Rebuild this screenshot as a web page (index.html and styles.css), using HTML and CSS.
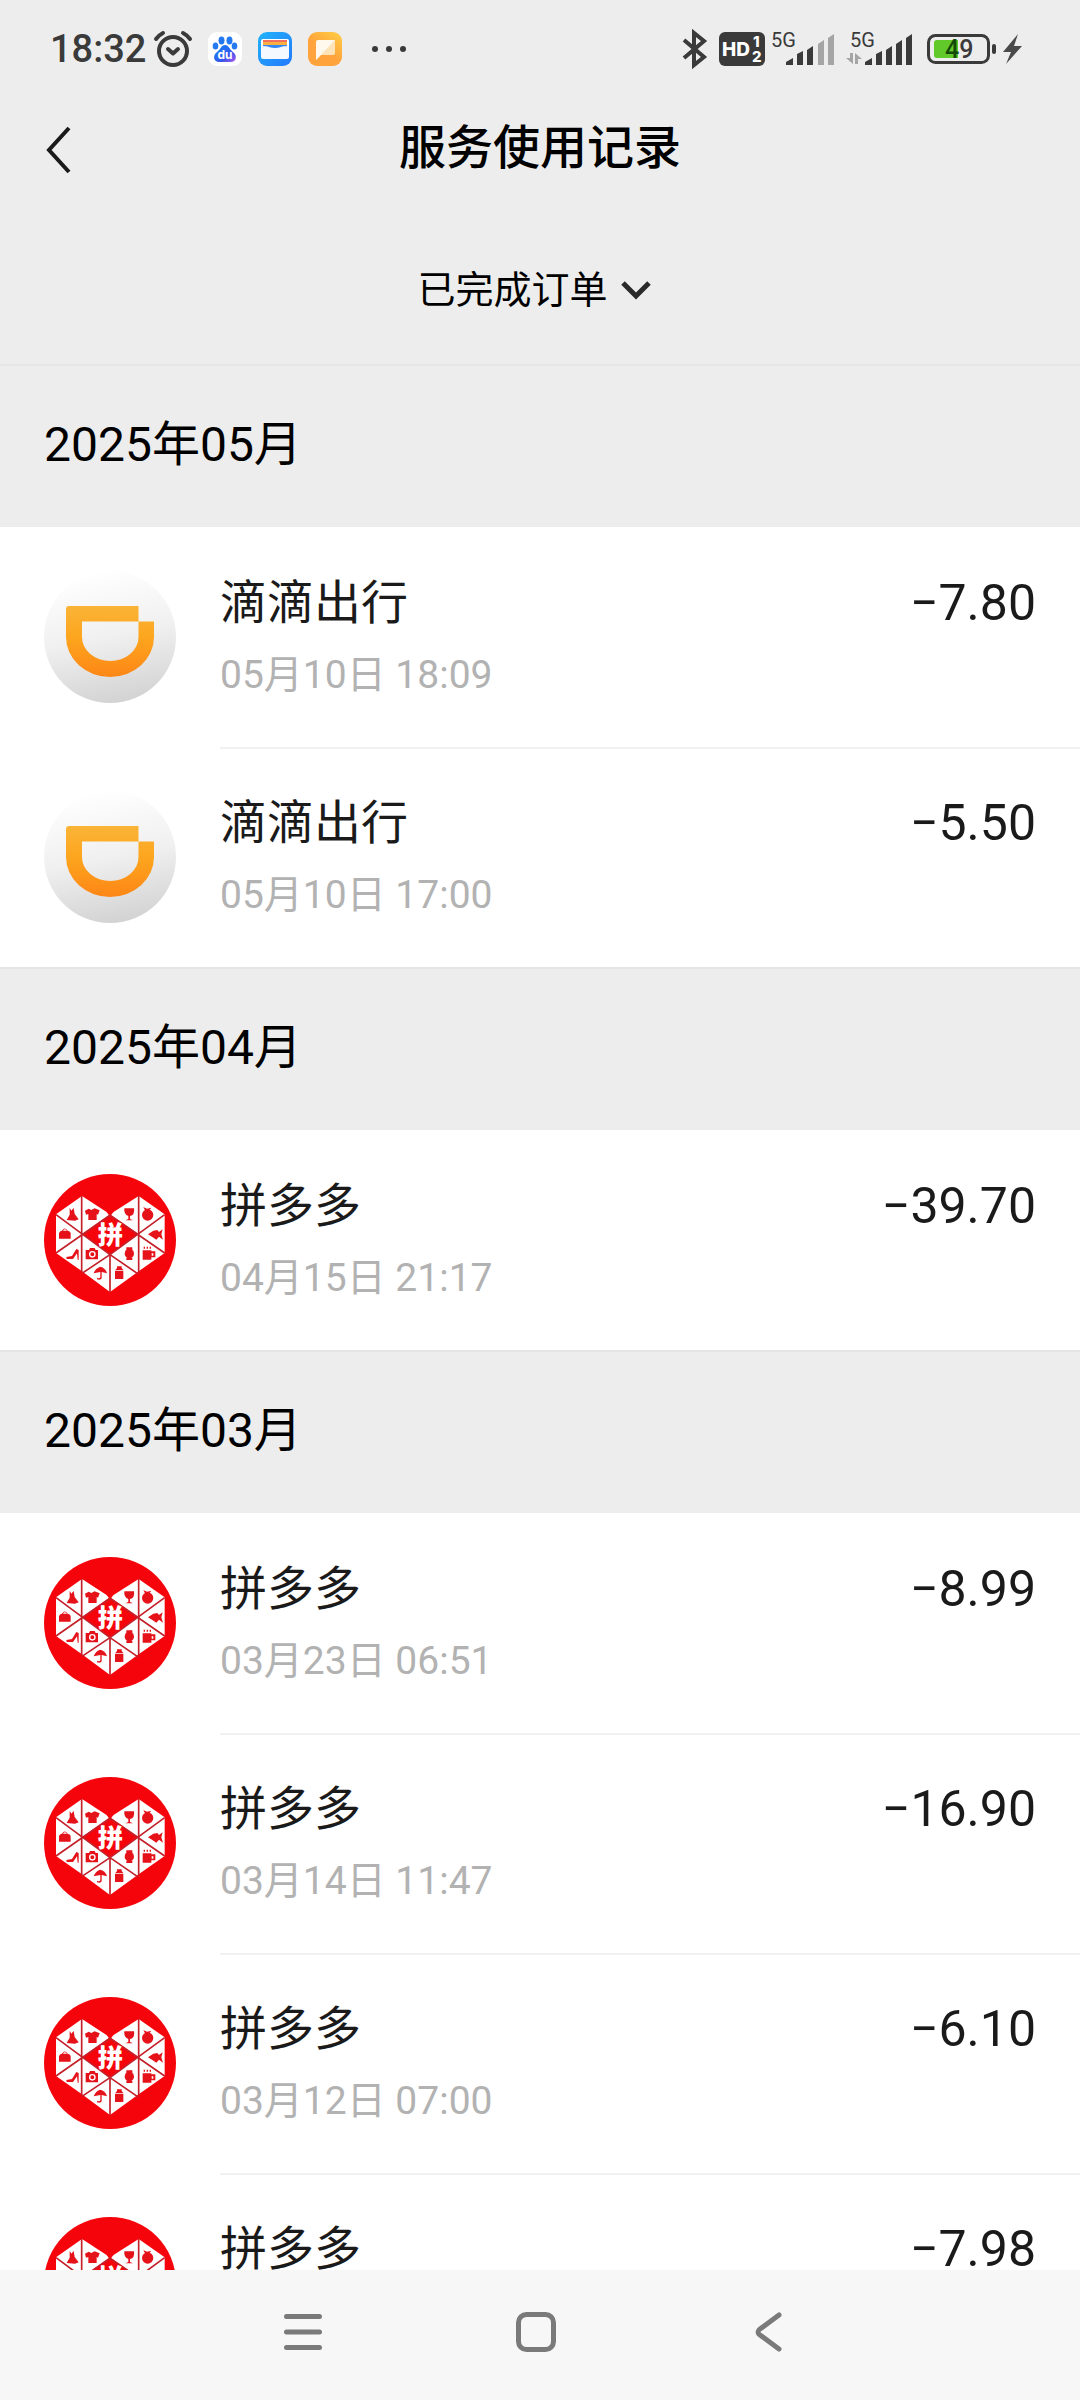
FILE: index.html
```html
<!DOCTYPE html>
<html lang="zh-CN">
<head>
<meta charset="utf-8">
<meta name="viewport" content="width=device-width, initial-scale=1">
<title>服务使用记录</title>
<link rel="stylesheet" href="styles.css">
</head>
<body>
<svg class="defs" aria-hidden="true">
  <defs>
    <linearGradient id="didi-bg" x1="0.4" y1="0" x2="0.6" y2="1">
      <stop offset="0" stop-color="#ffffff"/><stop offset="0.5" stop-color="#f0f0f0"/><stop offset="1" stop-color="#d2d2d2"/>
    </linearGradient>
    <linearGradient id="didi-d" x1="0" y1="0" x2="0" y2="1">
      <stop offset="0" stop-color="#fab437"/><stop offset="0.45" stop-color="#fda51e"/><stop offset="1" stop-color="#fd8616"/>
    </linearGradient>
    <linearGradient id="paw" x1="0" y1="0" x2="1" y2="1">
      <stop offset="0.3" stop-color="#1f74f2"/><stop offset="0.65" stop-color="#3a55ee"/><stop offset="1" stop-color="#b45cf0"/>
    </linearGradient>
    <linearGradient id="wallet" x1="0" y1="0" x2="1" y2="1">
      <stop offset="0" stop-color="#1fb4fb"/><stop offset="1" stop-color="#2478fb"/>
    </linearGradient>
    <linearGradient id="note" x1="1" y1="0" x2="0.3" y2="1">
      <stop offset="0" stop-color="#ffcf45"/><stop offset="0.6" stop-color="#ffa43c"/>
    </linearGradient>
    <symbol id="didi" viewBox="0 0 132 132">
      <circle cx="66" cy="66" r="66" fill="url(#didi-bg)"/>
      <path fill="url(#didi-d)" fill-rule="evenodd" d="M25 35H94.500V50.500H110V66A44 40 0 0 1 22 66V38Q22 35 25 35ZM38 50.500V66A28.200 24 0 0 0 94.500 66V50.500Z"/>
    </symbol>
    <symbol id="pdd" viewBox="42 42 396 396">
      <circle cx="240" cy="240" r="198" fill="#f6040c"/>
      <path fill="#fff" d="M78 163L156 108L240 163L326 108L404 163V279L326 334L240 396L156 334L78 279Z"/>
      <path fill="#f6040c" d="M240 163L326 222L240 283L156 222ZM230 156H250L240 170Z"/>
      <g fill="none" stroke="#c4202a" stroke-width="5">
        <path d="M155 108V336M326 108V336M240 282V396"/>
        <path d="M78 164L240 284L326 343M404 164L240 284L156 340M78 279L240 166L404 279"/>
      </g>
      <text x="241" y="252" class="pdd-char">拼</text>
      <g fill="#e5121a">
        <path d="M119 143L124 152L131 144L134 162L146 178L135 182L110 180L119 164Z"/>
        <path d="M176 146L184 150L194 145L209 151L204 164L200 162V180H175V162L168 164L165 152Z"/>
        <path d="M283 145H312Q315 166 300 168V177L309 181H286L295 177V168Q281 164 283 145Z"/>
        <circle cx="353" cy="165" r="17"/><path d="M340 141L351 146L364 143L356 153H346Z"/>
        <path fill-rule="evenodd" d="M87 236V219Q91 212 96 212Q104 199 113 212Q120 213 122 219V236ZM99 212H111Q104 204 99 212Z"/>
        <path d="M354 223L370 212L382 210L387 216L398 208L394 223L399 239L387 230L379 239L368 232Z"/>
        <path d="M109 291L126 288L139 267L146 270V299H143L141 280L129 297H110Z"/>
        <path fill-rule="evenodd" d="M167 270H177L180 264H194L197 270H204V298H167ZM187 273A10 10 0 1 0 187 293A10 10 0 1 0 187 273ZM187 277A6 6 0 1 1 187 289A6 6 0 1 1 187 277Z"/>
        <circle cx="298" cy="281" r="14"/><path d="M289 262H307V270H289ZM289 293H307V300H289Z"/>
        <path fill-rule="evenodd" d="M338 271H364V274H376V292H364V299H338ZM365 280V287H370V280Z"/>
        <path d="M341 260H345V266H341ZM350 260H354V266H350ZM359 260H363V266H359Z"/>
        <path d="M191 340Q196 325 210 320Q226 322 231 340L215 336V355Q212 362 201 358V353Q208 357 211 352V336Z"/>
        <path d="M261 319H275V324L280 330H256L261 324ZM255 332H280V357H255Z"/>
      </g>
    </symbol>
  </defs>
</svg>

<div class="status">
  <div class="status-left">
    <span class="clock">18:32</span>
    <svg class="icon" width="38" height="36" viewBox="0 0 38 36" aria-label="闹钟">
      <g fill="none" stroke="#3a3a3a" stroke-width="4" stroke-linecap="round" stroke-linejoin="round">
        <circle cx="19" cy="20" r="14"/><path d="M14 18L19 22.500L24 18"/>
        <path d="M2 8Q5 4 9 2M29 2Q33 4 36 8"/>
      </g>
    </svg>
    <svg class="icon" width="34" height="34" viewBox="0 0 34 34" aria-label="百度">
      <rect width="34" height="34" rx="9" fill="#fff"/>
      <g fill="#2478f0">
        <ellipse cx="13.500" cy="8.500" rx="3" ry="4"/><ellipse cx="21.500" cy="8.500" rx="3" ry="4"/>
        <ellipse cx="7.500" cy="14" rx="2.800" ry="3.600"/><ellipse cx="26.500" cy="14" rx="2.800" ry="3.600"/>
      </g>
      <path fill="url(#paw)" d="M17 13C21 13 21 17 25 20C30 24 28 30 23 30H11C6 30 4 24 9 20C13 17 13 13 17 13Z"/>
      <text x="17" y="27" class="paw-text">du</text>
    </svg>
    <svg class="icon" width="34" height="34" viewBox="0 0 34 34" aria-label="钱包">
      <rect width="34" height="34" rx="9" fill="url(#wallet)"/>
      <rect x="3" y="7" width="28" height="10" rx="2" fill="#fff"/>
      <path fill="#f2705f" d="M5 8H29V10H5Z"/><path fill="#fbb040" d="M5 10H29V13H5Z"/>
      <path fill="#3388f5" d="M5 13H29V17H5Z"/>
      <path fill="#f4f9ff" d="M3 14Q9 14 11 15Q17 17 23 15Q25 14 31 14V25Q31 27 29 27H5Q3 27 3 25Z"/>
    </svg>
    <svg class="icon" width="34" height="34" viewBox="0 0 34 34" aria-label="便签">
      <rect width="34" height="34" rx="9" fill="url(#note)"/>
      <path fill="#ffe3b8" d="M8 23L27 8V21Q27 23 25 23H13L8 28Z"/>
      <path fill="#fff8ec" d="M10 8H27L8 28V10Q8 8 10 8Z"/>
    </svg>
    <svg class="icon more" width="36" height="34" viewBox="0 0 36 34" aria-label="更多通知">
      <g fill="#3a3a3a"><circle cx="3" cy="17" r="3"/><circle cx="17" cy="17" r="3"/><circle cx="31" cy="17" r="3"/></g>
    </svg>
  </div>
  <div class="status-right">
    <svg class="icon" width="30" height="38" viewBox="0 0 30 38" aria-label="蓝牙">
      <path fill="none" stroke="#3a3a3a" stroke-width="4" d="M1 10L21 27L11 35V3L21 11L1 28"/>
    </svg>
    <svg class="icon" width="46" height="34" viewBox="0 0 46 34" aria-label="HD">
      <rect width="46" height="34" rx="6" fill="#3a3a3a"/>
      <text x="3" y="24" class="hd">HD</text><text x="34" y="15" class="hd-n">1</text><text x="33" y="30" class="hd-n">2</text>
    </svg>
    <svg class="icon" width="69" height="34" viewBox="0 0 69 34" aria-label="信号">
      <text x="0" y="15" class="net">5G</text>
      <g fill="#3a3a3a"><path d="M15 33V30L22 26V33ZM26 33V22L32 19V33ZM36 33V18L42 14V33Z"/></g>
      <g fill="#a5a5a5"><path d="M47 33V12L53 8V33ZM57 33V6L63 2V33Z"/></g>
    </svg>
    <svg class="icon" width="75" height="34" viewBox="0 0 75 34" aria-label="信号">
      <text x="4" y="15" class="net">5G</text>
      <path fill="#a5a5a5" d="M4 21H7V32L0 26H4ZM9 32V21L16 27H12V32Z"/>
      <path fill="#3a3a3a" d="M19 33V30L26 26V33ZM30 33V22L36 19V33ZM40 33V18L46 14V33ZM50 33V12L56 8V33ZM60 33V6L66 2V33Z"/>
    </svg>
    <svg class="icon" width="70" height="34" viewBox="0 0 70 34" aria-label="电量">
      <rect x="1.500" y="3.500" width="60" height="27" rx="7" fill="none" stroke="#3a3a3a" stroke-width="3"/>
      <path fill="#62c92a" d="M10 8H31V26H10Q7 26 7 23V11Q7 8 10 8Z"/>
      <rect x="65" y="12" width="4" height="10" rx="2" fill="#3a3a3a"/>
      <text x="18" y="26" class="batt"><tspan class="batt-on">4</tspan>9</text>
    </svg>
    <svg class="icon" width="20" height="34" viewBox="0 0 20 34" aria-label="充电">
      <path fill="#4a4a4a" d="M15 2L0 20H8L3 32L19 14H11Z"/>
    </svg>
  </div>
</div>

<header class="header">
  <div class="titlebar">
    <button class="back" type="button" aria-label="返回">
      <svg width="28" height="48" viewBox="0 0 28 48"><path d="M25 2L5 24L25 46" fill="none" stroke="#1a1a1a" stroke-width="4"/></svg>
    </button>
    <h1>服务使用记录</h1>
  </div>
  <label class="filter">
    <select aria-label="订单状态"><option>已完成订单</option></select>
    <svg width="42" height="24" viewBox="0 0 42 24" aria-hidden="true"><path d="M2 5L15 18L28 5" fill="none" stroke="#2a2a2a" stroke-width="5"/></svg>
  </label>
</header>

<main class="list">
  <section>
    <h2>2025年05月</h2>
    <ul>
      <li><svg class="avatar"><use href="#didi"/></svg><div class="body"><div><p class="name">滴滴出行</p><p class="date">05月10日 18:09</p></div><p class="amount">−7.80</p></div></li>
      <li><svg class="avatar"><use href="#didi"/></svg><div class="body"><div><p class="name">滴滴出行</p><p class="date">05月10日 17:00</p></div><p class="amount">−5.50</p></div></li>
    </ul>
  </section>
  <section>
    <h2>2025年04月</h2>
    <ul>
      <li><svg class="avatar"><use href="#pdd"/></svg><div class="body"><div><p class="name">拼多多</p><p class="date">04月15日 21:17</p></div><p class="amount">−39.70</p></div></li>
    </ul>
  </section>
  <section>
    <h2>2025年03月</h2>
    <ul>
      <li><svg class="avatar"><use href="#pdd"/></svg><div class="body"><div><p class="name">拼多多</p><p class="date">03月23日 06:51</p></div><p class="amount">−8.99</p></div></li>
      <li><svg class="avatar"><use href="#pdd"/></svg><div class="body"><div><p class="name">拼多多</p><p class="date">03月14日 11:47</p></div><p class="amount">−16.90</p></div></li>
      <li><svg class="avatar"><use href="#pdd"/></svg><div class="body"><div><p class="name">拼多多</p><p class="date">03月12日 07:00</p></div><p class="amount">−6.10</p></div></li>
      <li><svg class="avatar"><use href="#pdd"/></svg><div class="body"><div><p class="name">拼多多</p></div><p class="amount">−7.98</p></div></li>
    </ul>
  </section>
</main>

<nav class="sysnav">
  <button type="button" aria-label="最近任务"><svg width="42" height="42" viewBox="0 0 42 42"><path d="M4.500 5.500H37.500M4.500 21H37.500M4.500 36.500H37.500"/></svg></button>
  <button type="button" aria-label="主屏幕"><svg width="42" height="42" viewBox="0 0 42 42"><rect x="3.500" y="3.500" width="35" height="35" rx="8"/></svg></button>
  <button type="button" aria-label="后退"><svg width="42" height="42" viewBox="0 0 42 42"><path d="M31 4L12 18Q8 21 12 24L31 38"/></svg></button>
</nav>
</body>
</html>
```
FILE: styles.css
```css
* { box-sizing: border-box; margin: 0; padding: 0; }

body {
  display: flex;
  flex-direction: column;
  height: 100vh;
  overflow: hidden;
  background: #fff;
  color: #1a1a1a;
  font-family: Roboto, "Noto Sans CJK SC", sans-serif;
}

button, select {
  border: 0;
  background: none;
  color: inherit;
  font: inherit;
  appearance: none;
}

.defs { position: absolute; width: 0; height: 0; }

/* Status bar */
.status {
  display: flex;
  justify-content: space-between;
  align-items: center;
  height: 98px;
  padding: 0 57px 0 50px;
  background: #ededed;
  color: #3a3a3a;
}
.status-left { display: flex; align-items: center; gap: 16px; }
.status-right { display: flex; align-items: center; gap: 6px; }
.clock { width: 88px; font-size: 38px; font-weight: 500; line-height: 48px; white-space: nowrap; }
.icon { flex: none; display: block; overflow: visible; }
.more { margin-left: 14px; }
.paw-text { font: 700 12px Inter, sans-serif; fill: #fff; text-anchor: middle; }
.hd { font: 800 19px Inter, sans-serif; fill: #fff; }
.hd-n { font: 800 15px Inter, sans-serif; fill: #fff; }
.net { font: 400 20px Roboto, sans-serif; fill: #3a3a3a; }
.batt { font: 500 25px Roboto, sans-serif; fill: #3a3a3a; }
.batt-on { fill: #124a08; }

/* Page header */
.header { background: #ededed; color: #000; }
.titlebar {
  display: grid;
  grid-template-columns: 120px 1fr 120px;
  align-items: center;
  height: 100px;
}
.titlebar h1 { font-size: 47px; font-weight: 500; line-height: 64px; text-align: center; }
.back { height: 100px; padding: 4px 0 0 44px; text-align: left; }
.back svg { display: block; }
.filter {
  display: flex;
  justify-content: center;
  align-items: center;
  gap: 12px;
  height: 166px;
  padding-top: 18px;
}
.filter select { font-size: 38px; line-height: 56px; }

/* Record list */
.list { flex: 1; min-height: 0; overflow: hidden; }
.list h2 {
  height: 163px;
  padding: 0 44px;
  border-top: 2px solid #e5e5e5;
  background: #ededed;
  color: #000;
  font-size: 48px;
  font-weight: 400;
  line-height: 158px;
}
.list ul { list-style: none; }
.list li { display: flex; height: 220px; padding-left: 44px; gap: 44px; }
.avatar { flex: none; width: 132px; height: 132px; margin-top: 44px; }
.body {
  flex: 1;
  display: flex;
  justify-content: space-between;
  padding: 42px 44px 0 0;
  border-top: 2px solid transparent;
}
li + li .body { border-top-color: #f1f1f1; }
.name { font-size: 47px; line-height: 64px; }
.date { margin-top: 12px; color: #b2b2b2; font-size: 39px; line-height: 56px; }
.amount { font-size: 50px; line-height: 64px; }
.pdd-char { font: 900 76px "Noto Sans CJK SC", sans-serif; fill: #fff; text-anchor: middle; }

/* System navigation */
.sysnav {
  flex: none;
  display: flex;
  justify-content: center;
  gap: 133px;
  height: 130px;
  padding: 0 8px 6px 0;
  background: #f7f7f7;
}
.sysnav button { display: grid; place-items: center; width: 100px; }
.sysnav svg { fill: none; stroke: #7a7a7a; stroke-width: 5; stroke-linecap: round; stroke-linejoin: round; }
```
